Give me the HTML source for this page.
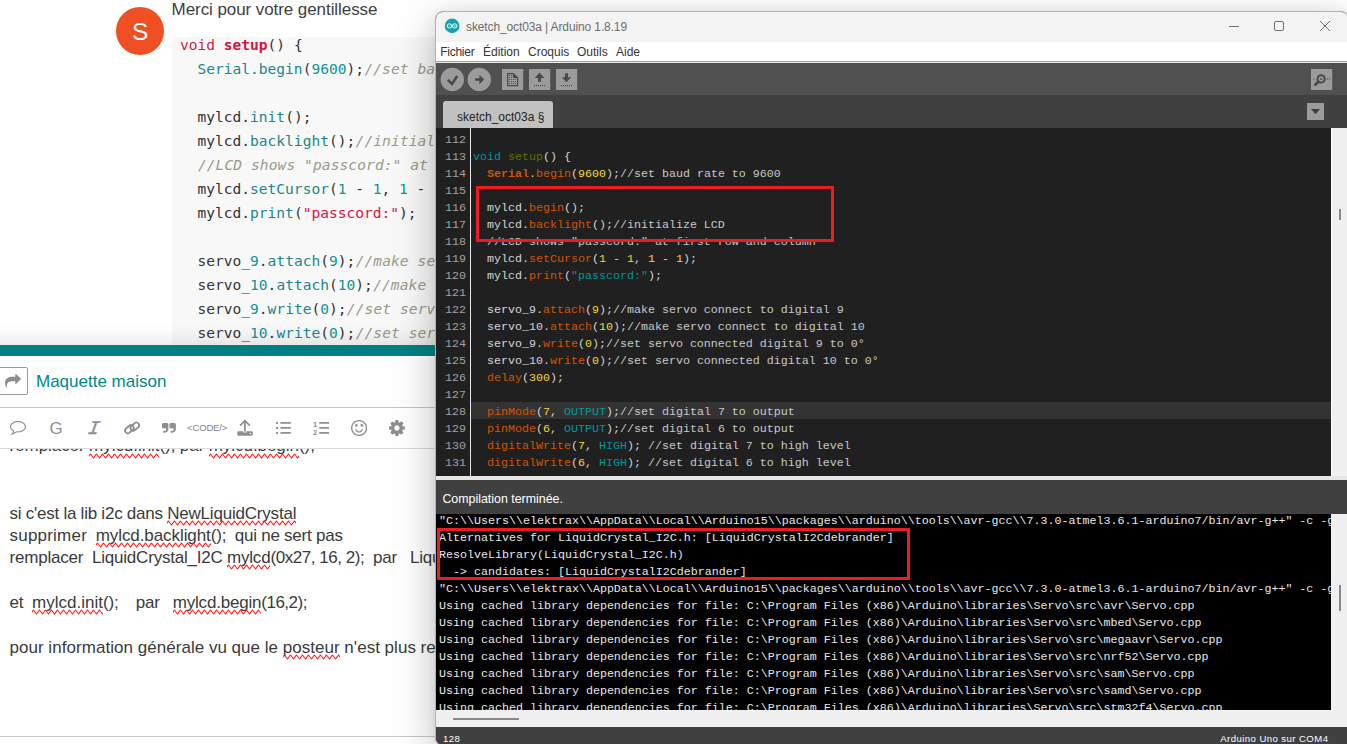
<!DOCTYPE html>
<html lang="fr">
<head>
<meta charset="utf-8">
<title>sketch_oct03a | Arduino 1.8.19</title>
<style>
*{box-sizing:border-box;margin:0;padding:0}
html,body{width:1347px;height:744px;overflow:hidden;background:#fff}
body{position:relative;font-family:"Liberation Sans","DejaVu Sans",sans-serif;color:#333}
.abs{position:absolute}
/* ---------- forum page (left) ---------- */
#forum{position:absolute;left:0;top:0;width:450px;height:744px;background:#fff;overflow:hidden}
#avatar{position:absolute;left:115.8px;top:6.7px;width:48.6px;height:48.6px;border-radius:50%;background:#f04f23;color:#fff;font-size:24.5px;line-height:49.5px;text-align:center}
#merci{position:absolute;left:171.6px;top:-1.4px;font-size:17px;line-height:22px;color:#404040;white-space:nowrap;letter-spacing:-.075px}
#fcode{position:absolute;left:172px;top:37px;width:300px;height:308px;background:#f8f8f8}
#fcode pre{position:absolute;left:8px;top:-4px;font-family:"DejaVu Sans Mono","Liberation Mono",monospace;font-size:14.55px;line-height:24px;color:#333;white-space:pre}
#fcode .k{color:#d0214a}
#fcode .t{color:#d4143c;font-weight:bold}
#fcode .f{color:#1b858b}
#fcode .n{color:#0f9499}
#fcode .s{color:#dd1144}
#fcode .c{color:#9a9a88;font-style:italic;position:relative;left:.4px;letter-spacing:.09px}
#tealbar{position:absolute;left:-30px;top:345px;width:500px;height:11px;background:#008082;box-shadow:0 -2px 20px rgba(0,0,0,.17)}
#replybtn{position:absolute;left:-3px;top:367px;width:31px;height:28px;border:1px solid #9a9a9a;border-radius:2px;background:#fff}
#topic{position:absolute;left:36px;top:371px;font-size:17px;line-height:22px;color:#00878a;white-space:nowrap}
.tb{color:#909090;white-space:nowrap}
.hr{position:absolute;left:0;width:450px;height:1px;background:#c4c4c4}
#edtext{position:absolute;left:0;top:449px;width:450px;height:286px;overflow:hidden}
#edtext div{position:absolute;left:9.5px;white-space:pre;font-size:17px;line-height:22px;color:#3a3a3a;letter-spacing:-.2px;word-spacing:-.2px}
.sp{position:relative;display:inline-block;line-height:19px;vertical-align:baseline}
.sp svg{position:absolute;left:0;top:16.3px;width:100%;height:6px;overflow:hidden}
/* ---------- arduino window ---------- */
#win{position:absolute;left:435px;top:11px;width:914px;height:735px;background:#404040;border:1px solid #b2b2b2;border-radius:8px 8px 0 8px;box-shadow:0 0 8px rgba(0,0,0,.05),0 12px 40px rgba(0,0,0,.27);overflow:hidden}
#inner{position:absolute;left:0;top:-1px;width:912px;height:740px}
#title{position:absolute;left:0;top:0;width:100%;height:31px;background:#f3f3f3}
#title .txt{position:absolute;left:30px;top:7.8px;font-size:12px;line-height:16px;color:#6c6c6c;white-space:nowrap;letter-spacing:-.12px}
#menu{position:absolute;left:0;top:31px;width:100%;height:20px;background:#fff;font-size:12px;line-height:18px;color:#333;white-space:nowrap}
#menu span{position:absolute;top:1px}
#menuline{position:absolute;left:0;top:50px;width:100%;height:2px;background:#e9e9e9;border-top:1px solid #a0a0a0}
#tool{position:absolute;left:0;top:52px;width:100%;height:32px;background:#505050}
#tabs{position:absolute;left:0;top:84px;width:100%;height:33px;background:#404040}
#tab{position:absolute;left:7px;top:6px;width:110px;height:27px;background:#c1c1c1;border-radius:3px 3px 0 0;font-size:12px;line-height:14px;color:#222;white-space:nowrap}
#tab span{position:absolute;left:14px;top:8.8px}
#editor{position:absolute;left:0;top:117px;width:895px;height:348px;background:#202020;overflow:hidden}
#gutterline{position:absolute;left:34px;top:0;width:1px;height:100%;background:#e8e8e8}
#hl{position:absolute;left:35px;top:274px;width:860px;height:17px;background:#333}
.mono{font-family:"Liberation Mono","DejaVu Sans Mono",monospace;font-size:11.667px;line-height:17px;white-space:pre}
#lnums{position:absolute;left:9px;top:4px;color:#a2a2a2}
#code{position:absolute;left:37px;top:4px;color:#d6d6d6}
#code .o{color:#f39c12}
#code .b{color:#d35400}
#code .g{color:#5e6d03}
#code .q{color:#00979c}
#code .m{color:#c8c8c8}
#code .y{color:#f7d842}
#vscroll{position:absolute;left:895px;top:117px;width:20px;height:348px;background:#f0f0f0;border-left:1px solid #fff}
#split{position:absolute;left:0;top:465px;width:100%;height:4px;background:#e6e6e6}
#status{position:absolute;left:0;top:469px;width:100%;height:34px;background:#404040;color:#fff;font-size:12.4px}
#status span{position:absolute;left:6.4px;top:12.4px;line-height:14px;white-space:nowrap}
#console{position:absolute;left:0;top:503px;width:895px;height:196px;background:#000;color:#e8e8e8;overflow:hidden}
#console pre{position:absolute;left:3px;top:-1px}
#cvscroll{position:absolute;left:895px;top:503px;width:20px;height:196px;background:#f0f0f0}
#hscroll{position:absolute;left:0;top:699px;width:100%;height:17px;background:#f0f0f0}
#bottom{position:absolute;left:0;top:716px;width:100%;height:20px;background:#404040;color:#fff;font-size:9.6px;letter-spacing:.42px}
.redbox{position:absolute;border:3px solid #ed1c24}
</style>
</head>
<body>
<svg width="0" height="0" style="position:absolute"><defs><pattern id="wv" width="6" height="6" patternUnits="userSpaceOnUse"><path d="M-1.5 5L1.5 1L4.5 5L7.5 1" fill="none" stroke="#ff2020" stroke-width="1.15" stroke-linejoin="round"/></pattern></defs></svg>
<div id="forum">
  <div id="avatar">S</div>
  <div id="merci">Merci pour votre gentillesse</div>
  <div id="fcode"><pre><span class="k">void</span> <span class="t">setup</span>() {
  <span class="f">Serial.begin</span>(<span class="n">9600</span>);<span class="c">//set baud rate to 9600</span>

  mylcd.<span class="f">init</span>();
  mylcd.<span class="f">backlight</span>();<span class="c">//initialize LCD</span>
  <span class="c">//LCD shows "passcord:" at first row and column</span>
  mylcd.<span class="f">setCursor</span>(<span class="n">1</span> - <span class="n">1</span>, <span class="n">1</span> - <span class="n">1</span>);
  mylcd.<span class="f">print</span>(<span class="s">"passcord:"</span>);

  servo_<span class="n">9</span>.<span class="f">attach</span>(<span class="n">9</span>);<span class="c">//make servo connect to digital 9</span>
  servo_<span class="n">10</span>.<span class="f">attach</span>(<span class="n">10</span>);<span class="c">//make servo connect to digital 10</span>
  servo_<span class="n">9</span>.<span class="f">write</span>(<span class="n">0</span>);<span class="c">//set servo connected digital 9 to 0°</span>
  servo_<span class="n">10</span>.<span class="f">write</span>(<span class="n">0</span>);<span class="c">//set servo connected digital 10 to 0°</span></pre></div>
  <div id="tealbar"></div>
  <div class="abs" style="left:0;top:356px;width:450px;height:388px;background:#fff"></div>
  <div id="replybtn"></div>
  <svg class="abs" style="left:5px;top:374.2px" width="16" height="13.8" viewBox="0 0 1792 1600" preserveAspectRatio="none"><path fill="#8e8e8e" transform="translate(0,1472) scale(1,-1)" d="M1792 896C1792 913 1785 929 1773 941L1261 1453C1249 1465 1233 1472 1216 1472C1181 1472 1152 1443 1152 1408V1152H928C600 1152 192 1094 53 749C11 643 0 528 0 416C0 276 70 93 127 -35C138 -58 149 -90 164 -111C171 -121 178 -128 192 -128C212 -128 224 -112 224 -93C224 -77 220 -59 219 -43C216 -2 214 39 214 80C214 557 497 640 928 640H1152V384C1152 349 1181 320 1216 320C1233 320 1249 327 1261 339L1773 851C1785 863 1792 879 1792 896Z"/></svg>
  <div id="topic">Maquette maison</div>
  <div class="hr" style="top:407px"></div>
  <div id="edbar">
<svg class="abs" style="left:9.8px;top:421px" width="16.0" height="13.7" viewBox="0 0 1792 1536" preserveAspectRatio="none"><path fill="#8e8e8e" transform="translate(0,1280) scale(1,-1)" d="M896 1152C1312 1152 1664 918 1664 640C1664 362 1312 128 896 128C853 128 809 131 766 136L709 142L666 104C584 32 492 -25 391 -67C417 -21 442 34 461 105L488 201L401 251C228 349 128 491 128 640C128 918 480 1152 896 1152ZM1792 640C1792 994 1391 1280 896 1280C401 1280 0 994 0 640C0 437 132 256 338 139C291 -28 219 -88 156 -159C141 -177 124 -192 129 -217C129 -217 129 -217 129 -218C134 -240 152 -256 172 -256C173 -256 175 -256 177 -256C216 -251 255 -244 291 -234C464 -190 620 -108 751 8C798 3 847 0 896 0C1391 0 1792 286 1792 640Z"/></svg>
<svg class="abs" style="left:162px;top:423px" width="13.9" height="9.8" viewBox="0 0 1664 1408" preserveAspectRatio="none"><path fill="#8e8e8e" transform="translate(0,1408) scale(1,-1)" d="M768 1216C768 1322 682 1408 576 1408H192C86 1408 0 1322 0 1216V832C0 726 86 640 192 640H416C469 640 512 597 512 544V512C512 371 397 256 256 256H192C157 256 128 227 128 192V64C128 29 157 0 192 0H256C538 0 768 230 768 512ZM1664 1216C1664 1322 1578 1408 1472 1408H1088C982 1408 896 1322 896 1216V832C896 726 982 640 1088 640H1312C1365 640 1408 597 1408 544V512C1408 371 1293 256 1152 256H1088C1053 256 1024 227 1024 192V64C1024 29 1053 0 1088 0H1152C1434 0 1664 230 1664 512Z"/></svg>
<svg class="abs" style="left:236px;top:418px" width="18" height="19" viewBox="0 0 18 19"><path d="M8.9 2.4V13 M4.5 7.1L8.9 2.6L13.3 7.1" fill="none" stroke="#8e8e8e" stroke-width="1.7" stroke-linecap="round" stroke-linejoin="round"/><path fill="#8e8e8e" d="M2.6 13.2H7.3V14.4H10.5V13.2H15.4Q16.9 13.2 16.9 14.6V16.3Q16.9 17.7 15.4 17.7H2.6Q1.2 17.7 1.2 16.3V14.6Q1.2 13.2 2.6 13.2Z"/><circle cx="14.5" cy="15.5" r="0.8" fill="#fff"/></svg>
<svg class="abs" style="left:275px;top:420px" width="17" height="16" viewBox="0 0 17 16"><g fill="#8e8e8e"><rect x="1" y="1.9" width="2.1" height="2.1" rx=".6"/><rect x="1" y="6.9" width="2.1" height="2.1" rx=".6"/><rect x="1" y="11.9" width="2.1" height="2.1" rx=".6"/><rect x="5.4" y="2.1" width="10.5" height="1.7" rx=".5"/><rect x="5.4" y="7.1" width="10.5" height="1.7" rx=".5"/><rect x="5.4" y="12.1" width="10.5" height="1.7" rx=".5"/></g></svg>
<svg class="abs" style="left:312px;top:420px" width="18" height="16" viewBox="0 0 18 16"><g fill="#8e8e8e"><rect x="7.2" y="2.1" width="9.9" height="1.7" rx=".5"/><rect x="7.2" y="7.1" width="9.9" height="1.7" rx=".5"/><rect x="7.2" y="12.1" width="9.9" height="1.7" rx=".5"/><text x="1" y="6.6" font-family="Liberation Sans,sans-serif" font-weight="bold" font-size="7.4">1</text><text x="1" y="14.7" font-family="Liberation Sans,sans-serif" font-weight="bold" font-size="7.4">2</text></g></svg>
<svg class="abs" style="left:351px;top:420px" width="16.2" height="16" viewBox="0 0 1536 1536" preserveAspectRatio="none"><path fill="#8e8e8e" transform="translate(0,1408) scale(1,-1)" d="M1134 461C1145 495 1126 530 1093 541C1059 552 1023 533 1012 499C979 392 880 320 768 320C656 320 557 392 524 499C513 533 477 552 444 541C410 530 391 495 402 461C452 300 599 192 768 192C937 192 1084 300 1134 461ZM640 896C640 967 583 1024 512 1024C441 1024 384 967 384 896C384 825 441 768 512 768C583 768 640 825 640 896ZM1152 896C1152 967 1095 1024 1024 1024C953 1024 896 967 896 896C896 825 953 768 1024 768C1095 768 1152 825 1152 896ZM1408 640C1408 287 1121 0 768 0C415 0 128 287 128 640C128 993 415 1280 768 1280C1121 1280 1408 993 1408 640ZM1536 640C1536 1064 1192 1408 768 1408C344 1408 0 1064 0 640C0 216 344 -128 768 -128C1192 -128 1536 216 1536 640Z"/></svg>
<svg class="abs" style="left:389px;top:420px" width="15.8" height="16" viewBox="0 0 1536 1536" preserveAspectRatio="none"><path fill="#8e8e8e" transform="translate(0,1408) scale(1,-1)" d="M1024 640C1024 499 909 384 768 384C627 384 512 499 512 640C512 781 627 896 768 896C909 896 1024 781 1024 640ZM1536 749C1536 766 1524 782 1507 785L1324 813C1314 846 1300 879 1283 911C1317 958 1354 1002 1388 1048C1393 1055 1396 1062 1396 1071C1396 1079 1394 1087 1389 1093C1347 1152 1277 1214 1224 1263C1217 1269 1208 1273 1199 1273C1190 1273 1181 1270 1175 1264L1033 1157C1004 1172 974 1184 943 1194L915 1378C913 1395 897 1408 879 1408H657C639 1408 625 1396 621 1380C605 1320 599 1255 592 1194C561 1184 530 1171 501 1156L363 1263C355 1269 346 1273 337 1273C303 1273 168 1127 144 1094C139 1087 135 1080 135 1071C135 1062 139 1054 145 1047C182 1002 218 957 252 909C236 879 223 849 213 817L27 789C12 786 0 768 0 753V531C0 514 12 498 29 495L212 468C222 434 236 401 253 369C219 322 182 278 148 232C143 225 140 218 140 209C140 201 142 193 147 186C189 128 259 66 312 18C319 11 328 7 337 7C346 7 355 10 362 16L503 123C532 108 562 96 593 86L621 -98C623 -115 639 -128 657 -128H879C897 -128 911 -116 915 -100C931 -40 937 25 944 86C975 96 1006 109 1035 124L1173 16C1181 11 1190 7 1199 7C1233 7 1368 154 1392 186C1398 193 1401 200 1401 209C1401 218 1397 227 1391 234C1354 279 1318 323 1284 372C1300 401 1312 431 1323 463L1508 491C1524 494 1536 512 1536 527Z"/></svg>
<span class="abs tb" style="left:49.5px;top:419px;font-size:17px;line-height:20px">G</span>
<span class="abs tb" style="left:88.3px;top:416.4px;font-size:19.5px;line-height:26px;font-family:'Liberation Mono',monospace;font-style:italic;transform:skewX(-9deg);-webkit-text-stroke:.35px #909090">I</span>
<svg class="abs" style="left:122px;top:419px" width="20" height="17" viewBox="0 0 20 17"><g fill="none" stroke="#8e8e8e" stroke-width="1.8"><rect x="2.6" y="7.5" width="9.6" height="5.4" rx="2.7" transform="rotate(-40 7.4 10.2)"/><rect x="8" y="4.9" width="9.6" height="5.4" rx="2.7" transform="rotate(-40 12.8 7.6)"/></g></svg>
<span class="abs tb" style="left:187px;top:422px;font-size:9.6px;line-height:12px;letter-spacing:-0.2px;color:#858585">&lt;CODE/&gt;</span>
</div>
  <div class="hr" style="top:448px;background:#dcdcdc"></div>
  <div id="edtext">
    <div style="top:-13.6px;letter-spacing:-.05px">remplacer <span class="sp">mylcd.init<svg><rect width="100%" height="6" fill="url(#wv)"/></svg></span>(); par <span class="sp">mylcd.begin<svg><rect width="100%" height="6" fill="url(#wv)"/></svg></span>();</div>
    <div style="top:54px">si c'est la lib i2c dans <span class="sp">NewLiquidCrystal<svg><rect width="100%" height="6" fill="url(#wv)"/></svg></span></div>
    <div style="top:75.9px"><span style="letter-spacing:.22px">supprimer</span>  <span class="sp" style="letter-spacing:-.08px">mylcd.backlight<svg><rect width="100%" height="6" fill="url(#wv)"/></svg></span>();  qui ne sert pas</div>
    <div style="top:97.8px">remplacer  LiquidCrystal_I2C <span class="sp">mylcd<svg><rect width="100%" height="6" fill="url(#wv)"/></svg></span><span style="letter-spacing:-.42px">(0x27, 16, 2);</span>  par   LiquidCrystal_I2C <span class="sp">mylcd<svg><rect width="100%" height="6" fill="url(#wv)"/></svg></span>(0x27);</div>
    <div style="top:142.8px">et  <span class="sp" style="letter-spacing:.03px">mylcd.init<svg><rect width="100%" height="6" fill="url(#wv)"/></svg></span>();    par   <span class="sp">mylcd.begin<svg><rect width="100%" height="6" fill="url(#wv)"/></svg></span><span style="letter-spacing:-.5px">(16,2);</span></div>
    <div style="top:187.9px;letter-spacing:.06px">pour information générale vu que le <span class="sp">posteur<svg><rect width="100%" height="6" fill="url(#wv)"/></svg></span> n'est plus revenu</div>
  </div>
  <div class="hr" style="top:736px;background:#c6c6c6"></div>
</div>

<div id="win"><div id="inner">
  <div id="title"><svg class="abs" style="left:8px;top:7px" width="16.4" height="16.4" viewBox="0 0 16.4 16.4"><circle cx="8.1" cy="7.9" r="7.35" fill="#17a1a5"/><g fill="none" stroke="#f2ffff" stroke-width=".95"><ellipse cx="5.5" cy="7.9" rx="2.35" ry="2.1"/><ellipse cx="10.7" cy="7.9" rx="2.35" ry="2.1"/></g><path d="M4.6 7.9H6.4M9.8 7.9H11.6M10.7 7V8.8" stroke="#dff" stroke-width=".6"/></svg><div class="txt">sketch_oct03a | Arduino 1.8.19</div>
<svg class="abs" style="left:780px;top:0" width="132" height="31" viewBox="0 0 132 31"><g fill="none" stroke="#6e6e6e" stroke-width="1"><path d="M13 15.5H23"/><rect x="58.5" y="10.5" width="9" height="9" rx="1.5"/><path d="M104 10L114 20M114 10L104 20"/></g></svg></div>
  <div id="menu"><span style="left:4.2px;letter-spacing:-.25px">Fichier</span><span style="left:47px">Édition</span><span style="left:92px">Croquis</span><span style="left:141px">Outils</span><span style="left:180px">Aide</span></div>
  <div id="menuline"></div>
  <div id="tool">
<svg class="abs" style="left:0;top:0" width="160" height="32" viewBox="0 0 160 32">
<g fill="#9b9b9b"><circle cx="16.3" cy="16.4" r="11.7"/><circle cx="43.3" cy="16.4" r="11.7"/><rect x="66" y="6" width="21.2" height="21"/><rect x="93" y="6" width="21.2" height="21"/><rect x="120" y="6" width="21.2" height="21"/></g>
<path d="M11.9 16.9L16 21L21.2 13" fill="none" stroke="#4a4a4a" stroke-width="2.6"/>
<path fill="#4a4a4a" d="M39.1 15.2H43.4V11.7L48.2 16.45L43.4 21.2V17.7H39.1Z"/>
<path fill="none" stroke="#4a4a4a" stroke-width="1.2" d="M71.6 10.6H77.2L81.6 14.7V22.6H71.6Z"/><path fill="#4a4a4a" d="M77 10.4L81.8 14.9H77Z"/>
<g fill="#4a4a4a"><rect x="72.9" y="12" width="1" height="1"/><rect x="74.9" y="12" width="1" height="1"/>
<rect x="72.9" y="14" width="1" height="1"/><rect x="74.9" y="14" width="1" height="1"/>
<rect x="72.9" y="16" width="1" height="1"/><rect x="74.9" y="16" width="1" height="1"/><rect x="76.9" y="16" width="1" height="1"/><rect x="78.9" y="16" width="1" height="1"/>
<rect x="72.9" y="18" width="1" height="1"/><rect x="74.9" y="18" width="1" height="1"/><rect x="76.9" y="18" width="1" height="1"/><rect x="78.9" y="18" width="1" height="1"/>
<rect x="72.9" y="20" width="1" height="1"/><rect x="74.9" y="20" width="1" height="1"/><rect x="76.9" y="20" width="1" height="1"/><rect x="78.9" y="20" width="1" height="1"/>
<path d="M103.5 9.6L108.4 14.9H105V18.8H102V14.9H98.7Z"/>
<rect x="98" y="22" width="1" height="1.2"/><rect x="100" y="22" width="1" height="1.2"/><rect x="102" y="22" width="1" height="1.2"/><rect x="104" y="22" width="1" height="1.2"/><rect x="106" y="22" width="1" height="1.2"/><rect x="108" y="22" width="1" height="1.2"/>
<path d="M129 10.2H132V14.3H135.2L130.5 19.2L125.7 14.3H129Z"/>
<rect x="125" y="22" width="1" height="1.2"/><rect x="127" y="22" width="1" height="1.2"/><rect x="129" y="22" width="1" height="1.2"/><rect x="131" y="22" width="1" height="1.2"/><rect x="133" y="22" width="1" height="1.2"/><rect x="135" y="22" width="1" height="1.2"/>
</g></svg>
<svg class="abs" style="left:870px;top:0" width="32" height="32" viewBox="0 0 32 32"><rect x="5" y="6" width="21.2" height="21" fill="#9b9b9b"/><circle cx="15.1" cy="15.9" r="3.6" fill="none" stroke="#4a4a4a" stroke-width="2.1"/><circle cx="15.1" cy="15.9" r="1" fill="#4a4a4a"/><path d="M12.4 18.8L9.3 21.7" stroke="#4a4a4a" stroke-width="2.7" stroke-linecap="round"/><g fill="#4a4a4a"><rect x="7.4" y="15.5" width="1" height="1"/><rect x="21" y="15.5" width="1" height="1"/><rect x="23" y="15.5" width="1" height="1"/></g></svg>
</div>
  <div id="tabs"><div id="tab"><span>sketch_oct03a §</span></div><svg class="abs" style="left:871px;top:8px" width="17" height="17" viewBox="0 0 17 17"><rect width="17" height="17" fill="#9b9b9b"/><path d="M4 6.1H13L8.5 11.2Z" fill="#404040"/></svg></div>
  <div id="editor">
    <div id="hl"></div>
    <div id="gutterline"></div>
    <pre id="lnums" class="mono">112
113
114
115
116
117
118
119
120
121
122
123
124
125
126
127
128
129
130
131
132</pre>
    <pre id="code" class="mono">

<span class="q">void</span> <span class="g">setup</span>() {
  <span class="b" style="font-weight:bold">Serial</span>.<span class="b">begin</span>(<span class="y">9600</span>);<span class="m">//set baud rate to 9600</span>

  mylcd.<span class="b">begin</span>();
  mylcd.<span class="b">backlight</span>();<span class="m">//initialize LCD</span>
  <span class="m">//LCD shows "passcord:" at first row and column</span>
  mylcd.<span class="b">setCursor</span>(<span class="y">1</span> - <span class="y">1</span>, <span class="y">1</span> - <span class="y">1</span>);
  mylcd.<span class="b">print</span>(<span class="q">"passcord:"</span>);

  servo_9.<span class="b">attach</span>(<span class="y">9</span>);<span class="m">//make servo connect to digital 9</span>
  servo_10.<span class="b">attach</span>(<span class="y">10</span>);<span class="m">//make servo connect to digital 10</span>
  servo_9.<span class="b">write</span>(<span class="y">0</span>);<span class="m">//set servo connected digital 9 to 0°</span>
  servo_10.<span class="b">write</span>(<span class="y">0</span>);<span class="m">//set servo connected digital 10 to 0°</span>
  <span class="b">delay</span>(<span class="y">300</span>);

  <span class="b">pinMode</span>(<span class="y">7</span>, <span class="q">OUTPUT</span>);<span class="m">//set digital 7 to output</span>
  <span class="b">pinMode</span>(<span class="y">6</span>, <span class="q">OUTPUT</span>);<span class="m">//set digital 6 to output</span>
  <span class="b">digitalWrite</span>(<span class="y">7</span>, <span class="q">HIGH</span>); <span class="m">//set digital 7 to high level</span>
  <span class="b">digitalWrite</span>(<span class="y">6</span>, <span class="q">HIGH</span>); <span class="m">//set digital 6 to high level</span>
</pre>
    <div class="redbox" style="left:40px;top:58px;width:358px;height:56px"></div>
  </div>
  <div id="vscroll"><div class="abs" style="left:7px;top:81px;width:2px;height:11px;background:#8a8a8a"></div></div>
  <div id="split"></div>
  <div id="status"><span>Compilation terminée.</span></div>
  <div id="console"><pre class="mono">"C:\\Users\\elektrax\\AppData\\Local\\Arduino15\\packages\\arduino\\tools\\avr-gcc\\7.3.0-atmel3.6.1-arduino7/bin/avr-g++" -c -g -Os -w -std=gnu++11
Alternatives for LiquidCrystal_I2C.h: [LiquidCrystalI2Cdebrander]
ResolveLibrary(LiquidCrystal_I2C.h)
  -> candidates: [LiquidCrystalI2Cdebrander]
"C:\\Users\\elektrax\\AppData\\Local\\Arduino15\\packages\\arduino\\tools\\avr-gcc\\7.3.0-atmel3.6.1-arduino7/bin/avr-g++" -c -g -Os -w -std=gnu++11
Using cached library dependencies for file: C:\Program Files (x86)\Arduino\libraries\Servo\src\avr\Servo.cpp
Using cached library dependencies for file: C:\Program Files (x86)\Arduino\libraries\Servo\src\mbed\Servo.cpp
Using cached library dependencies for file: C:\Program Files (x86)\Arduino\libraries\Servo\src\megaavr\Servo.cpp
Using cached library dependencies for file: C:\Program Files (x86)\Arduino\libraries\Servo\src\nrf52\Servo.cpp
Using cached library dependencies for file: C:\Program Files (x86)\Arduino\libraries\Servo\src\sam\Servo.cpp
Using cached library dependencies for file: C:\Program Files (x86)\Arduino\libraries\Servo\src\samd\Servo.cpp
Using cached library dependencies for file: C:\Program Files (x86)\Arduino\libraries\Servo\src\stm32f4\Servo.cpp</pre>
    <div class="redbox" style="left:.6px;top:14.2px;width:473.2px;height:51.6px"></div>
  </div>
  <div id="cvscroll"><div class="abs" style="left:8px;top:71px;width:2px;height:26px;background:#8a8a8a"></div></div>
  <div id="hscroll"><div class="abs" style="left:17px;top:8px;width:66px;height:2px;background:#8a8a8a"></div></div>
  <div id="bottom"><span class="abs" style="left:7px;top:5.6px">128</span><span class="abs" style="left:784.3px;top:5.6px;white-space:nowrap">Arduino Uno sur COM4</span></div>
</div></div>
</body>
</html>
